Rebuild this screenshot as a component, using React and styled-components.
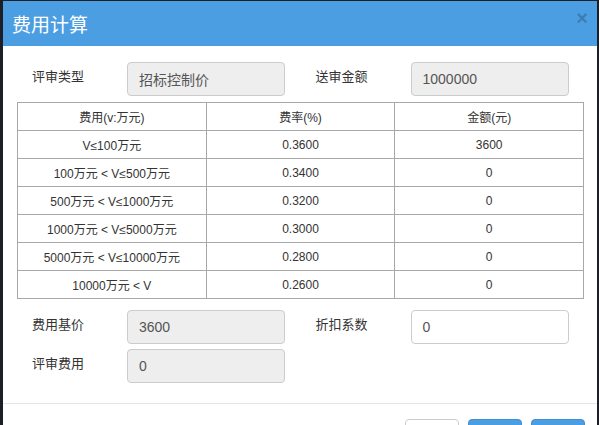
import React from 'react';
import styled, {createGlobalStyle} from 'styled-components';

const GlobalStyle = createGlobalStyle`
    html, body {
        margin: 0;
        padding: 0;
        background: #1d1f26;
        overflow: hidden;
    }
    body {
        font-family: "Liberation Sans", "Noto Sans CJK SC", sans-serif;
    }
`;

const Modal = styled.div`
    margin: 1px 0 0 3px;
    width: 594px;
    min-height: 460px;
    background: #fff;
    display: flex;
    flex-direction: column;
`;

const Header = styled.div`
    flex-shrink: 0;
    height: 45px;
    background: #4c9ee3;
    display: flex;
    align-items: center;
    justify-content: space-between;
    padding: 0 9px 0 9px;
    box-sizing: border-box;
`;

const Title = styled.h4`
    margin: 0;
    color: #fff;
    font-size: 19px;
    font-weight: normal;
    font-family: "Noto Sans CJK SC", sans-serif;
`;

const Close = styled.span`
    color: #000;
    opacity: 0.2;
    font-size: 20px;
    font-weight: bold;
    line-height: 1;
    margin-top: -11px;
`;

const Body = styled.div`
    flex-shrink: 0;
    padding: 16px 13px 20px 14px;
    border-bottom: 1px solid #e5e5e5;
`;

const FormRow = styled.div`
    display: grid;
    grid-template-columns: 1fr 1fr;
    margin-top: ${p => p.gap || 0}px;
`;

const Field = styled.div`
    display: flex;
    align-items: flex-start;
    padding-left: 15px;
`;

const Label = styled.label`
    width: 95px;
    padding-top: 4px;
    font-size: 13px;
    color: #333;
    font-family: "Noto Sans CJK SC", sans-serif;
`;

const Input = styled.div`
    width: 158px;
    height: 34px;
    box-sizing: border-box;
    border: 1px solid #ccc;
    border-radius: 4px;
    background: ${p => (p.readOnly ? '#eee' : '#fff')};
    padding: 0 11px;
    display: flex;
    align-items: center;
    font-size: 14px;
    color: #555;
    font-family: "Liberation Sans", "Noto Sans CJK SC", sans-serif;
`;

const Table = styled.table`
    width: 567px;
    margin-top: 6px;
    border-collapse: collapse;
    table-layout: fixed;
    & td {
        border: 1px solid #a8a8a8;
        height: 27px;
        padding: 0;
        text-align: center;
        font-size: 12px;
        color: #333;
        font-family: "Liberation Sans", "Noto Sans CJK SC", sans-serif;
    }
`;

const Footer = styled.div`
    padding: 15px 12px 0 0;
    display: flex;
    justify-content: flex-end;
    gap: 9px;
`;

const Button = styled.button`
    width: 54px;
    height: 34px;
    border-radius: 4px;
    border: 1px solid ${p => (p.primary ? '#3c8fd8' : '#ccc')};
    background: ${p => (p.primary ? '#4c9ee3' : '#fff')};
    color: ${p => (p.primary ? '#fff' : '#333')};
    font-size: 13px;
    line-height: 1;
    font-family: "Noto Sans CJK SC", sans-serif;
`;

const rows = [
    ['V≤100万元', '0.3600', '3600'],
    ['100万元 < V≤500万元', '0.3400', '0'],
    ['500万元 < V≤1000万元', '0.3200', '0'],
    ['1000万元 < V≤5000万元', '0.3000', '0'],
    ['5000万元 < V≤10000万元', '0.2800', '0'],
    ['10000万元 < V', '0.2600', '0']
];

export default function App() {
    return (
        <>
            <GlobalStyle/>
            <Modal>
                <Header>
                    <Title>费用计算</Title>
                    <Close>×</Close>
                </Header>
                <Body>
                    <FormRow>
                        <Field>
                            <Label>评审类型</Label>
                            <Input readOnly>招标控制价</Input>
                        </Field>
                        <Field>
                            <Label>送审金额</Label>
                            <Input readOnly>1000000</Input>
                        </Field>
                    </FormRow>
                    <Table>
                        <tbody>
                            <tr>
                                <td>费用(v:万元)</td>
                                <td>费率(%)</td>
                                <td>金额(元)</td>
                            </tr>
                            {rows.map(r => (
                                <tr key={r[0]}>
                                    <td>{r[0]}</td>
                                    <td>{r[1]}</td>
                                    <td>{r[2]}</td>
                                </tr>
                            ))}
                        </tbody>
                    </Table>
                    <FormRow gap={11}>
                        <Field>
                            <Label>费用基价</Label>
                            <Input readOnly>3600</Input>
                        </Field>
                        <Field>
                            <Label>折扣系数</Label>
                            <Input>0</Input>
                        </Field>
                    </FormRow>
                    <FormRow gap={5}>
                        <Field>
                            <Label>评审费用</Label>
                            <Input readOnly>0</Input>
                        </Field>
                    </FormRow>
                </Body>
                <Footer>
                    <Button>取消</Button>
                    <Button primary>计算</Button>
                    <Button primary>确定</Button>
                </Footer>
            </Modal>
        </>
    );
}
